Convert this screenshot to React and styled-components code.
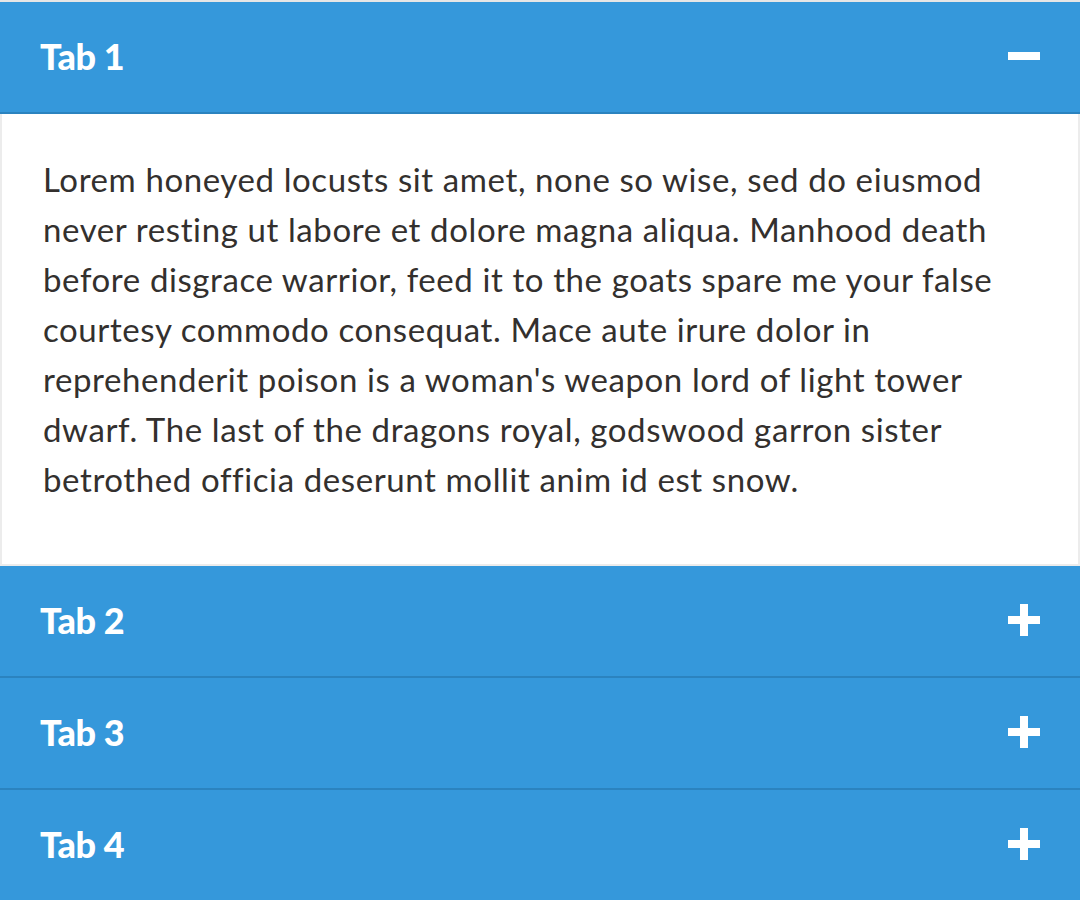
import { useState } from "react"
import styled, { createGlobalStyle } from "styled-components"

const Global = createGlobalStyle`
  html, body {
    margin: 0;
    padding: 0;
    background: #fff;
  }
  body {
    font-family: Lato, "Open Sans", sans-serif;
  }
`

const Accordion = styled.div`
  width: 100%;
  border-top: 2px solid #e6e6e6;
`

const Item = styled.div`
  display: flex;
  flex-direction: column;
`

const Header = styled.button`
  box-sizing: border-box;
  display: flex;
  align-items: center;
  justify-content: space-between;
  height: 112px;
  padding: 0 40px 3px 40px;
  border: none;
  border-bottom: 2px solid #2b83bf;
  background: #3598db;
  color: #fff;
  font-family: Lato, sans-serif;
  font-weight: 900;
  font-size: 36px;
  cursor: pointer;
  text-align: left;
`

const Title = styled.span`
  letter-spacing: -0.4px;
`

const Icon = styled.svg`
  width: 32px;
  height: 32px;
  display: block;
`

const Panel = styled.div`
  background: #fff;
  border: 2px solid #ececec;
  border-top: none;
  padding: 40px 20px 60px 41px;
`

const Text = styled.p`
  margin: 0;
  font-family: Lato, sans-serif;
  font-size: 33px;
  letter-spacing: 0.6px;
  line-height: 50px;
  color: #33302e;
`

const tabs = [
  {
    title: "Tab 1",
    body: "Lorem honeyed locusts sit amet, none so wise, sed do eiusmod never resting ut labore et dolore magna aliqua. Manhood death before disgrace warrior, feed it to the goats spare me your false courtesy commodo consequat. Mace aute irure dolor in reprehenderit poison is a woman's weapon lord of light tower dwarf. The last of the dragons royal, godswood garron sister betrothed officia deserunt mollit anim id est snow.",
  },
  { title: "Tab 2", body: "" },
  { title: "Tab 3", body: "" },
  { title: "Tab 4", body: "" },
]

function Toggle({ open }) {
  return (
    <Icon viewBox="0 0 32 32">
      <rect x="0" y="12" width="32" height="8" fill="#fff" />
      {!open && <rect x="12" y="0" width="8" height="32" fill="#fff" />}
    </Icon>
  )
}

export default function App() {
  const [open, setOpen] = useState(0)
  return (
    <>
      <Global />
      <Accordion>
        {tabs.map((t, i) => (
          <Item key={t.title}>
            <Header onClick={() => setOpen(open === i ? -1 : i)}>
              <Title>{t.title}</Title>
              <Toggle open={open === i} />
            </Header>
            {open === i && (
              <Panel>
                <Text>{t.body}</Text>
              </Panel>
            )}
          </Item>
        ))}
      </Accordion>
    </>
  )
}
